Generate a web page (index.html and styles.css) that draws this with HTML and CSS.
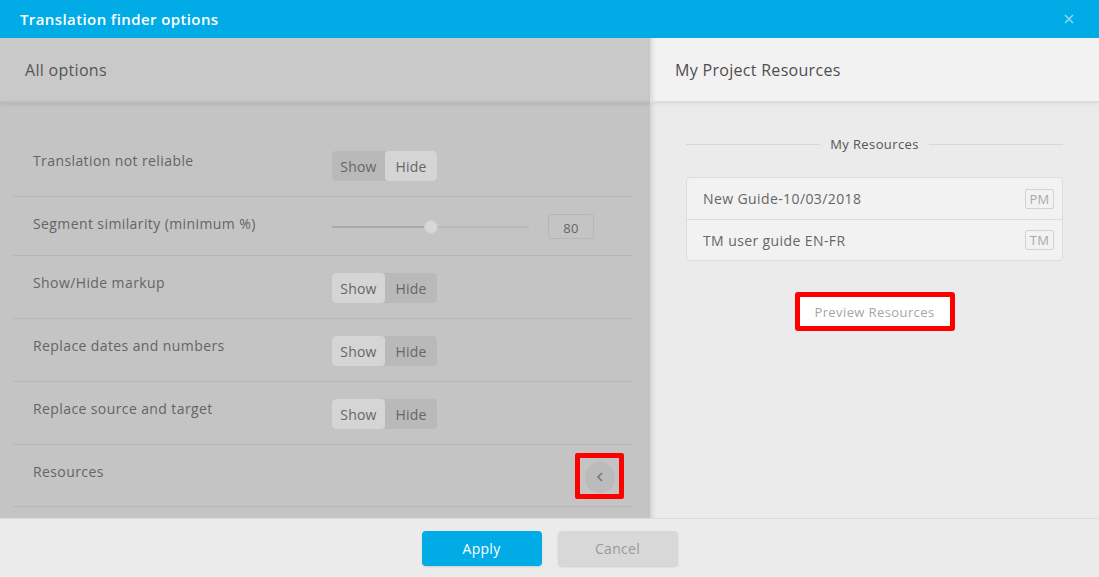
FILE: index.html
```html
<!DOCTYPE html>
<html>
<head>
<meta charset="utf-8">
<link rel="stylesheet" href="styles.css">
</head>
<body>
<div class="dialog">
  <div class="titlebar">
    <span class="title">Translation finder options</span>
    <span class="close">
      <svg width="10" height="10" viewBox="0 0 10 10"><path d="M1 1L9 9M9 1L1 9" stroke="#8ed6f2" stroke-width="1.6" fill="none"/></svg>
    </span>
  </div>
  <div class="main">
    <div class="left">
      <div class="panel-head left-head">All options</div>
      <div class="options">
        <div class="row">
          <div class="label">Translation not reliable</div>
          <div class="toggle"><span class="seg">Show</span><span class="seg on">Hide</span></div>
        </div>
        <div class="row slider-row">
          <div class="label">Segment similarity (minimum %)</div>
          <div class="slider-wrap">
            <div class="slider">
              <div class="fill"></div>
              <div class="thumb"></div>
            </div>
            <div class="numbox">80</div>
          </div>
        </div>
        <div class="row">
          <div class="label">Show/Hide markup</div>
          <div class="toggle"><span class="seg on">Show</span><span class="seg">Hide</span></div>
        </div>
        <div class="row">
          <div class="label">Replace dates and numbers</div>
          <div class="toggle"><span class="seg on">Show</span><span class="seg">Hide</span></div>
        </div>
        <div class="row">
          <div class="label">Replace source and target</div>
          <div class="toggle"><span class="seg on">Show</span><span class="seg">Hide</span></div>
        </div>
        <div class="row res-row">
          <div class="label">Resources</div>
          <div class="redbox small">
            <div class="circle">
              <svg width="10" height="12" viewBox="0 0 10 12"><path d="M7 2L3 6L7 10" stroke="#777" stroke-width="1.6" fill="none"/></svg>
            </div>
          </div>
        </div>
      </div>
    </div>
    <div class="right">
      <div class="panel-head right-head">My Project Resources</div>
      <div class="res-content">
        <div class="divider"><span>My Resources</span></div>
        <div class="list">
          <div class="item"><span>New Guide-10/03/2018</span><span class="badge">PM</span></div>
          <div class="item"><span>TM user guide EN-FR</span><span class="badge">TM</span></div>
        </div>
        <div class="preview-wrap">
          <div class="redbox big"><div class="preview">Preview Resources</div></div>
        </div>
      </div>
    </div>
  </div>
  <div class="footer">
    <button class="btn apply">Apply</button>
    <button class="btn cancel">Cancel</button>
  </div>
</div>
</body>
</html>
```

FILE: styles.css
```css
* { box-sizing: border-box; }
html, body { margin: 0; padding: 0; }
body {
  width: 1099px;
  height: 577px;
  overflow: hidden;
  font-family: "Open Sans", "Liberation Sans", sans-serif;
  background: #ebebeb;
  letter-spacing: 0.4px;
}
.dialog {
  display: flex;
  flex-direction: column;
  height: 577px;
}
.titlebar {
  height: 38px;
  background: #00abe6;
  display: flex;
  align-items: center;
  justify-content: space-between;
  padding: 0 25px 0 20px;
}
.title {
  color: #fff;
  font-size: 15px;
  font-weight: 600;
  letter-spacing: 0.4px;
}
.close { display: flex; align-items: center; }
.main {
  display: flex;
  height: 480px;
}
.left {
  width: 650px;
  background: #c4c4c4;
  display: flex;
  flex-direction: column;
}
.panel-head {
  height: 63px;
  display: flex;
  align-items: center;
  padding-left: 25px;
  font-size: 16px;
  font-weight: 500;
  color: #4f4f4f;
  letter-spacing: 0.3px;
}
.left-head {
  background: #c9c9c9;
  box-shadow: 0 2px 3px rgba(0,0,0,0.08);
  border-bottom: 2px solid #bdbdbd;
  height: 65px;
  color: #555;
}
.options {
  padding: 31px 18px 0 13px;
}
.row {
  display: flex;
  align-items: flex-start;
  padding: 17px 0 15px 20px;
  border-bottom: 1px solid #b7b7b7;
}
.slider-row { padding-bottom: 16px; }
.label {
  width: 299px;
  font-size: 14px;
  line-height: 20px;
  color: #646464;
}
.toggle {
  display: flex;
  height: 30px;
  border-radius: 4px;
  background: #b9b9b9;
  overflow: hidden;
}
.seg {
  width: 53px;
  display: flex;
  align-items: center;
  justify-content: center;
  font-size: 14px;
  color: #666;
  border-radius: 4px;
  letter-spacing: 0.2px;
}
.seg + .seg { width: 52px; }
.seg.on { background: #d5d5d5; }
.slider-wrap {
  display: flex;
  align-items: center;
  height: 25px;
}
.slider {
  position: relative;
  width: 197px;
  height: 2px;
  background: #b9b9b9;
  margin-top: 1px;
}
.fill {
  width: 99px;
  height: 2px;
  background: #aaa;
}
.thumb {
  position: absolute;
  left: 92px;
  top: -6px;
  width: 14px;
  height: 14px;
  border-radius: 50%;
  background: #d8d8d8;
  border: 1px solid #cbcbcb;
}
.numbox {
  margin-left: 19px;
  width: 46px;
  height: 25px;
  border: 1px solid #b6b6b6;
  border-radius: 3px;
  display: flex;
  align-items: center;
  justify-content: center;
  font-size: 13px;
  color: #666;
  padding-top: 2px;
}
.res-row { padding-bottom: 7px; }
.redbox {
  border: 5px solid #f00;
  border-radius: 2px;
}
.redbox.small {
  margin-left: auto;
  margin-right: 8px;
  margin-top: -9px;
  width: 49px;
  height: 46px;
  display: flex;
  align-items: center;
  justify-content: center;
}
.circle {
  width: 30px;
  height: 30px;
  border-radius: 50%;
  background: #bbb;
  box-shadow: 0 1px 1px rgba(0,0,0,0.06);
  display: flex;
  align-items: center;
  justify-content: center;
  margin-top: 2px;
}
.right {
  flex: 1;
  background: #ebebeb;
  box-shadow: inset 6px 0 5px -4px rgba(0,0,0,0.12);
  display: flex;
  flex-direction: column;
}
.right-head {
  background: #f2f2f2;
  border-bottom: 2px solid #dedede;
  height: 65px;
  box-shadow: inset 6px 0 5px -4px rgba(0,0,0,0.12), 0 2px 3px rgba(0,0,0,0.04);
}
.res-content {
  padding: 32px 36px 0 36px;
}
.divider {
  display: flex;
  align-items: center;
  font-size: 13px;
  color: #555;
  gap: 10px;
}
.divider::before, .divider::after {
  content: "";
  flex: 1;
  height: 1px;
  background: #d6d6d6;
}
.list {
  margin-top: 24px;
  background: #f2f2f2;
  border: 1px solid #dcdcdc;
  border-radius: 4px;
}
.item {
  height: 41px;
  display: flex;
  align-items: center;
  justify-content: space-between;
  padding: 0 8px 0 16px;
  font-size: 14px;
  color: #666;
}
.item + .item { border-top: 1px solid #dcdcdc; }
.badge {
  width: 29px;
  height: 20px;
  border: 1px solid #d2d2d2;
  border-radius: 2px;
  font-size: 13px;
  color: #aaa;
  display: flex;
  align-items: center;
  justify-content: center;
  letter-spacing: 0.2px;
}
.preview-wrap {
  display: flex;
  justify-content: center;
  margin-top: 31px;
}
.redbox.big {
  width: 160px;
  height: 39px;
  border-radius: 3px;
}
.preview {
  background: #fff;
  height: 100%;
  display: flex;
  align-items: center;
  justify-content: center;
  font-size: 13px;
  color: #a6a6a6;
}
.footer {
  height: 59px;
  background: #ebebeb;
  border-top: 1px solid #dcdcdc;
  display: flex;
  justify-content: center;
  align-items: flex-start;
  padding-top: 12px;
  gap: 16px;
}
.btn {
  width: 120px;
  height: 35px;
  border: none;
  border-radius: 4px;
  font-family: inherit;
  font-size: 14px;
  letter-spacing: 0.3px;
  box-shadow: 0 1px 2px rgba(0,0,0,0.12);
}
.apply { background: #00abe6; color: #fff; }
.cancel { background: #d8d8d8; color: #9a9a9a; }
```
